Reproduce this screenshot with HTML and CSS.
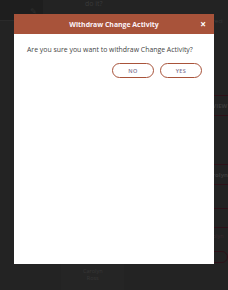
FILE: index.html
```html
<!DOCTYPE html>
<html lang="en">
<head>
    <meta charset="UTF-8">
    <meta name="viewport" content="width=device-width, initial-scale=1.0">
    <title>Withdraw Change Activity</title>
    <link rel="stylesheet" href="styles.css">
</head>
<body>
    <div class="page">
        <div class="top-row">
            <div class="side-box"><span class="side-icon">✎</span></div>
            <div class="question">do it?</div>
        </div>
        <div class="content">
            <div class="left-col"></div>
            <div class="mid-col">
                <div class="spacer"></div>
                <div class="author">Carolyn<br>Ross</div>
            </div>
            <div class="right-col">
                <div class="cell tall"><span class="reci">reci</span></div>
                <div class="cell">VIEW</div>
                <div class="cell big"></div>
                <div class="cell">rolyn</div>
                <div class="cell small"></div>
                <div class="cell none"></div>
                <div class="meta">22 November 2020 at 16:03 by Carolyn</div>
                <div class="ghost-btn"></div>
            </div>
        </div>
    </div>

    <div class="modal">
        <div class="modal-header">
            <span class="modal-title">Withdraw Change Activity</span>
            <span class="modal-close">×</span>
        </div>
        <div class="modal-body">
            <p class="modal-text">Are you sure you want to withdraw Change Activity?</p>
            <div class="modal-actions">
                <button class="btn-outline">NO</button>
                <button class="btn-outline">YES</button>
            </div>
        </div>
    </div>
</body>
</html>
```

FILE: styles.css
```css
:root {
    --brand: #a8533a;
    --backdrop: #232323;
}

body {
    margin: 0;
    background: var(--backdrop);
    font-family: "Open Sans", "Liberation Sans", sans-serif;
    overflow: hidden;
    height: 290px;
}

/* dimmed page behind the dialog */
.page {
    color: #363636;
    font-size: 7px;
}

.top-row {
    display: flex;
    height: 21px;
}

.side-box {
    width: 43px;
    background: #1e1e1e;
    border-bottom: 1px solid #2a2a2a;
    display: flex;
    justify-content: flex-end;
    align-items: center;
    padding-right: 6px;
    box-sizing: border-box;
}

.side-icon {
    color: #2e2e2e;
    font-size: 8px;
}

.question {
    margin-left: 42px;
    font-size: 7px;
    line-height: 7px;
    color: #3a3a3a;
}

.content {
    display: flex;
    height: 269px;
}

.left-col {
    width: 63px;
}

.mid-col {
    width: 65px;
    background: #252525;
    display: flex;
    flex-direction: column;
}

.spacer {
    flex: 1;
}

.author {
    text-align: center;
    font-size: 5.5px;
    line-height: 7px;
    margin-bottom: 8px;
    color: #383838;
}

.right-col {
    flex: 1;
    display: flex;
    flex-direction: column;
}

.cell {
    height: 19px;
    border-bottom: 1px solid #2e1219;
    padding-left: 88px;
    font-size: 6px;
    font-weight: bold;
    display: flex;
    align-items: center;
    color: #3a3a3a;
}

.cell.tall {
    height: 74px;
    align-items: flex-start;
}

.reci {
    font-weight: normal;
    margin-top: -4px;
}

.cell.big {
    height: 48px;
}

.cell.small {
    height: 23px;
    font-weight: normal;
}

.cell.none {
    height: 18px;
}

.meta {
    font-size: 5.5px;
    color: #3a2a2e;
    margin-top: 4px;
    white-space: nowrap;
}

.ghost-btn {
    margin-top: 11px;
    margin-left: 17px;
    height: 10px;
    border: 1px solid #2e1219;
    border-radius: 6px;
}

/* dialog */
.modal {
    position: fixed;
    top: 14px;
    left: 14px;
    width: 200px;
    height: 250px;
    background: #fff;
}

.modal-header {
    height: 20px;
    background: var(--brand);
    display: flex;
    justify-content: center;
    align-items: center;
    position: relative;
}

.modal-title {
    color: #fbf2f8;
    font-size: 6.9px;
    font-weight: bold;
}

.modal-close {
    position: absolute;
    right: 8px;
    top: 3px;
    color: #fff;
    font-size: 10px;
    font-weight: bold;
    line-height: 14px;
}

.modal-body {
    padding: 11px 12px 0 13px;
}

.modal-text {
    margin: 0;
    font-size: 6.9px;
    color: #444;
}

.modal-actions {
    display: flex;
    justify-content: flex-end;
    gap: 6px;
    margin-top: 9px;
}

.btn-outline {
    width: 42px;
    height: 15px;
    padding: 0;
    background: #fff;
    border: 1px solid var(--brand);
    border-radius: 8px;
    font-family: inherit;
    font-size: 5.5px;
    font-weight: 600;
    letter-spacing: 0.4px;
    color: #7d7290;
    cursor: pointer;
}
```
